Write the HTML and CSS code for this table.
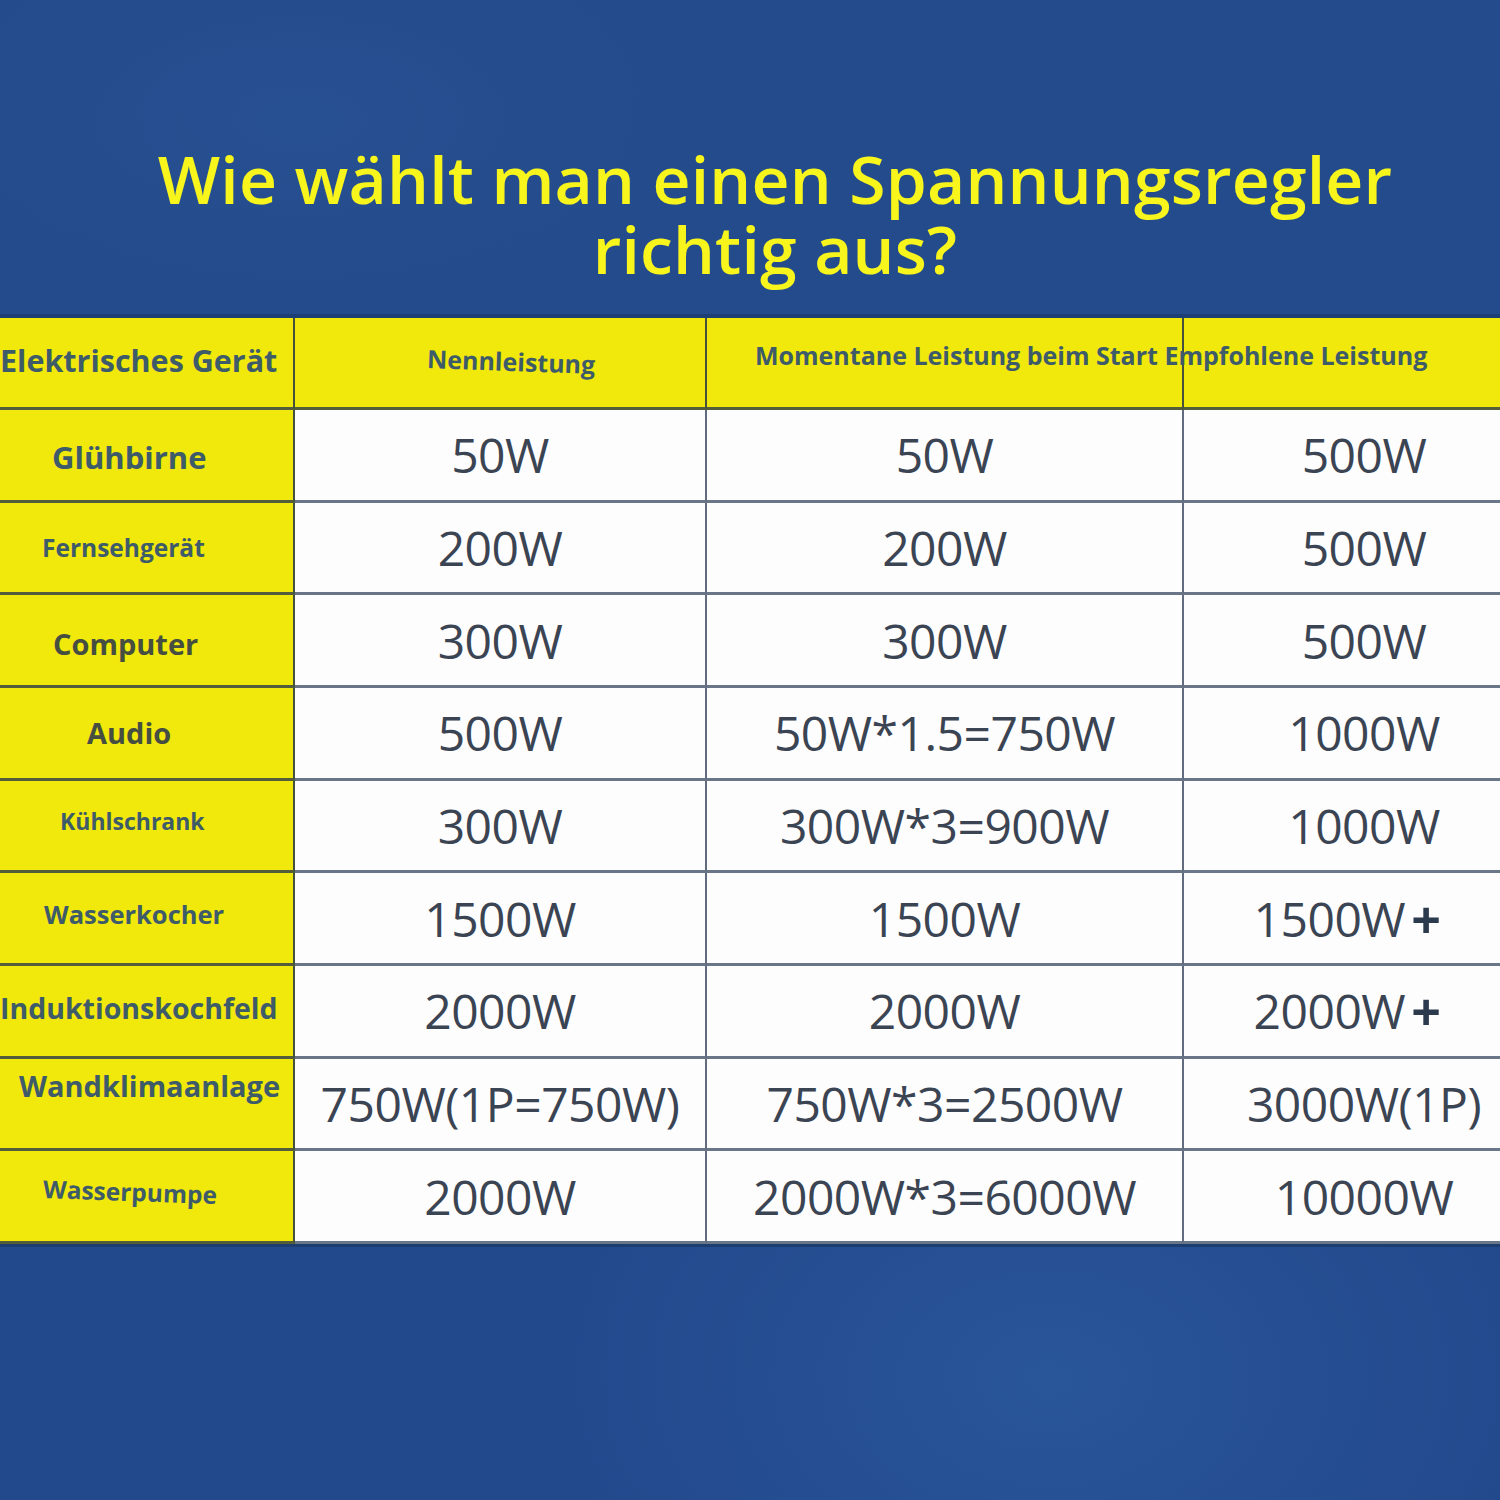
FILE: index.html
```html
<!DOCTYPE html>
<html lang="de">
<head>
<meta charset="utf-8">
<title>Spannungsregler</title>
<link rel="stylesheet" href="styles.css">
</head>
<body>
<main class="page">
  <h1 class="title">Wie wählt man einen Spannungsregler<br>richtig aus?</h1>
  <div class="table">
    <div class="hd hd-first"><span>Elektrisches Gerät</span></div>
    <div class="hd hd-nenn"><span>Nennleistung</span></div>
    <div class="hd hd-mom"><span>Momentane Leistung beim Start Empfohlene Leistung</span></div>
    <div class="hd hd-last"></div>

    <div class="lab lab-gluh"><span>Glühbirne</span></div>
    <div class="val">50W</div><div class="val">50W</div><div class="val val-last">500W</div>

    <div class="lab lab-fern"><span>Fernsehgerät</span></div>
    <div class="val">200W</div><div class="val">200W</div><div class="val val-last">500W</div>

    <div class="lab lab-comp"><span>Computer</span></div>
    <div class="val">300W</div><div class="val">300W</div><div class="val val-last">500W</div>

    <div class="lab lab-audio"><span>Audio</span></div>
    <div class="val">500W</div><div class="val">50W*1.5=750W</div><div class="val val-last">1000W</div>

    <div class="lab lab-kuehl"><span>Kühlschrank</span></div>
    <div class="val">300W</div><div class="val">300W*3=900W</div><div class="val val-last">1000W</div>

    <div class="lab lab-wk"><span>Wasserkocher</span></div>
    <div class="val">1500W</div><div class="val">1500W</div><div class="val val-last val-plus">1500W<b class="plus">+</b></div>

    <div class="lab lab-ind"><span>Induktionskochfeld</span></div>
    <div class="val">2000W</div><div class="val">2000W</div><div class="val val-last val-plus">2000W<b class="plus">+</b></div>

    <div class="lab lab-wand"><span>Wandklimaanlage</span></div>
    <div class="val">750W(1P=750W)</div><div class="val">750W*3=2500W</div><div class="val val-last">3000W(1P)</div>

    <div class="lab lab-pumpe"><span>Wasserpumpe</span></div>
    <div class="val">2000W</div><div class="val">2000W*3=6000W</div><div class="val val-last">10000W</div>
  </div>
</main>
</body>
</html>
```

FILE: styles.css
```css
* { box-sizing: border-box; }

html, body {
  margin: 0;
  padding: 0;
}

body {
  width: 1500px;
  height: 1500px;
  overflow: hidden;
  font-family: "Open Sans", "Noto Sans", sans-serif;
  background:
    radial-gradient(ellipse 700px 500px at 1050px 1380px, rgba(50, 100, 170, 0.45), rgba(50, 100, 170, 0) 70%),
    radial-gradient(ellipse 600px 300px at 300px 120px, rgba(45, 90, 160, 0.35), rgba(45, 90, 160, 0) 70%),
    linear-gradient(180deg, #244b8b 0%, #234a8a 40%, #22498c 100%);
}

.page {
  padding-top: 143px;
}

.title {
  margin: 0 0 35px 0;
  padding-left: 50px;
  text-align: center;
  color: #f7f51c;
  font-size: 66px;
  line-height: 70px;
  font-weight: 600;
  letter-spacing: 0.2px;
}

.table {
  display: grid;
  grid-template-columns: 295px 412px 477px 316px;
  grid-template-rows: 92px repeat(9, 92.67px);
  box-shadow: 0 -4px 0 #1d3f73, 0 3px 0 #1c3d70;
}

.hd,
.lab {
  background: #f1e80c;
  border-right: 2px solid rgba(40, 55, 70, 0.85);
  border-bottom: 3px solid rgba(45, 60, 70, 0.8);
  color: #3e5b69;
  font-weight: 700;
  display: flex;
  align-items: center;
}

.hd-last { border-right: none; }

.hd-first span {
  font-size: 30.5px;
  margin-left: 0;
  margin-top: -6px;
}

.hd-nenn span {
  font-size: 25px;
  margin-left: 132px;
  margin-top: -4px;
  transform: rotate(2deg);
  display: inline-block;
}

.hd-mom {
  position: relative;
  z-index: 2;
}

.hd-mom span {
  font-size: 25px;
  margin-left: 48px;
  margin-top: -16px;
  white-space: nowrap;
}

.lab span {
  display: inline-block;
  white-space: nowrap;
}

.lab-gluh span { font-size: 31px; margin-left: 52px; margin-top: 4px; }
.lab-fern span { font-size: 24.5px; margin-left: 42px; }
.lab-comp span { font-size: 29px; margin-left: 53px; margin-top: 6px; color: #454e40; }
.lab-audio span { font-size: 29px; margin-left: 87px; color: #454e40; }
.lab-kuehl span { font-size: 23px; margin-left: 60px; margin-top: -8px; }
.lab-wk span { font-size: 25.5px; margin-left: 44px; margin-top: -8px; }
.lab-ind span { font-size: 28.5px; margin-left: 0; margin-top: -6px; }
.lab-wand { align-items: flex-start; }
.lab-wand span { font-size: 29px; margin-left: 19px; margin-top: 7px; }
.lab-pumpe span { font-size: 24.5px; margin-left: 43px; margin-top: -10px; transform: rotate(2deg); }

.val {
  background: #fdfdfd;
  border-right: 2px solid rgba(70, 85, 105, 0.85);
  border-bottom: 3px solid rgba(80, 95, 115, 0.85);
  display: flex;
  align-items: center;
  justify-content: center;
  font-size: 48px;
  font-weight: 400;
  color: #3b4453;
  letter-spacing: -0.5px;
  white-space: nowrap;
}

.val-last {
  border-right: none;
  padding-left: 44px;
}

.val-last.val-plus {
  padding-left: 10px;
}

.plus {
  font-weight: 700;
  color: #2c3a4e;
  margin-left: 6px;
  font-size: 52px;
}
```
